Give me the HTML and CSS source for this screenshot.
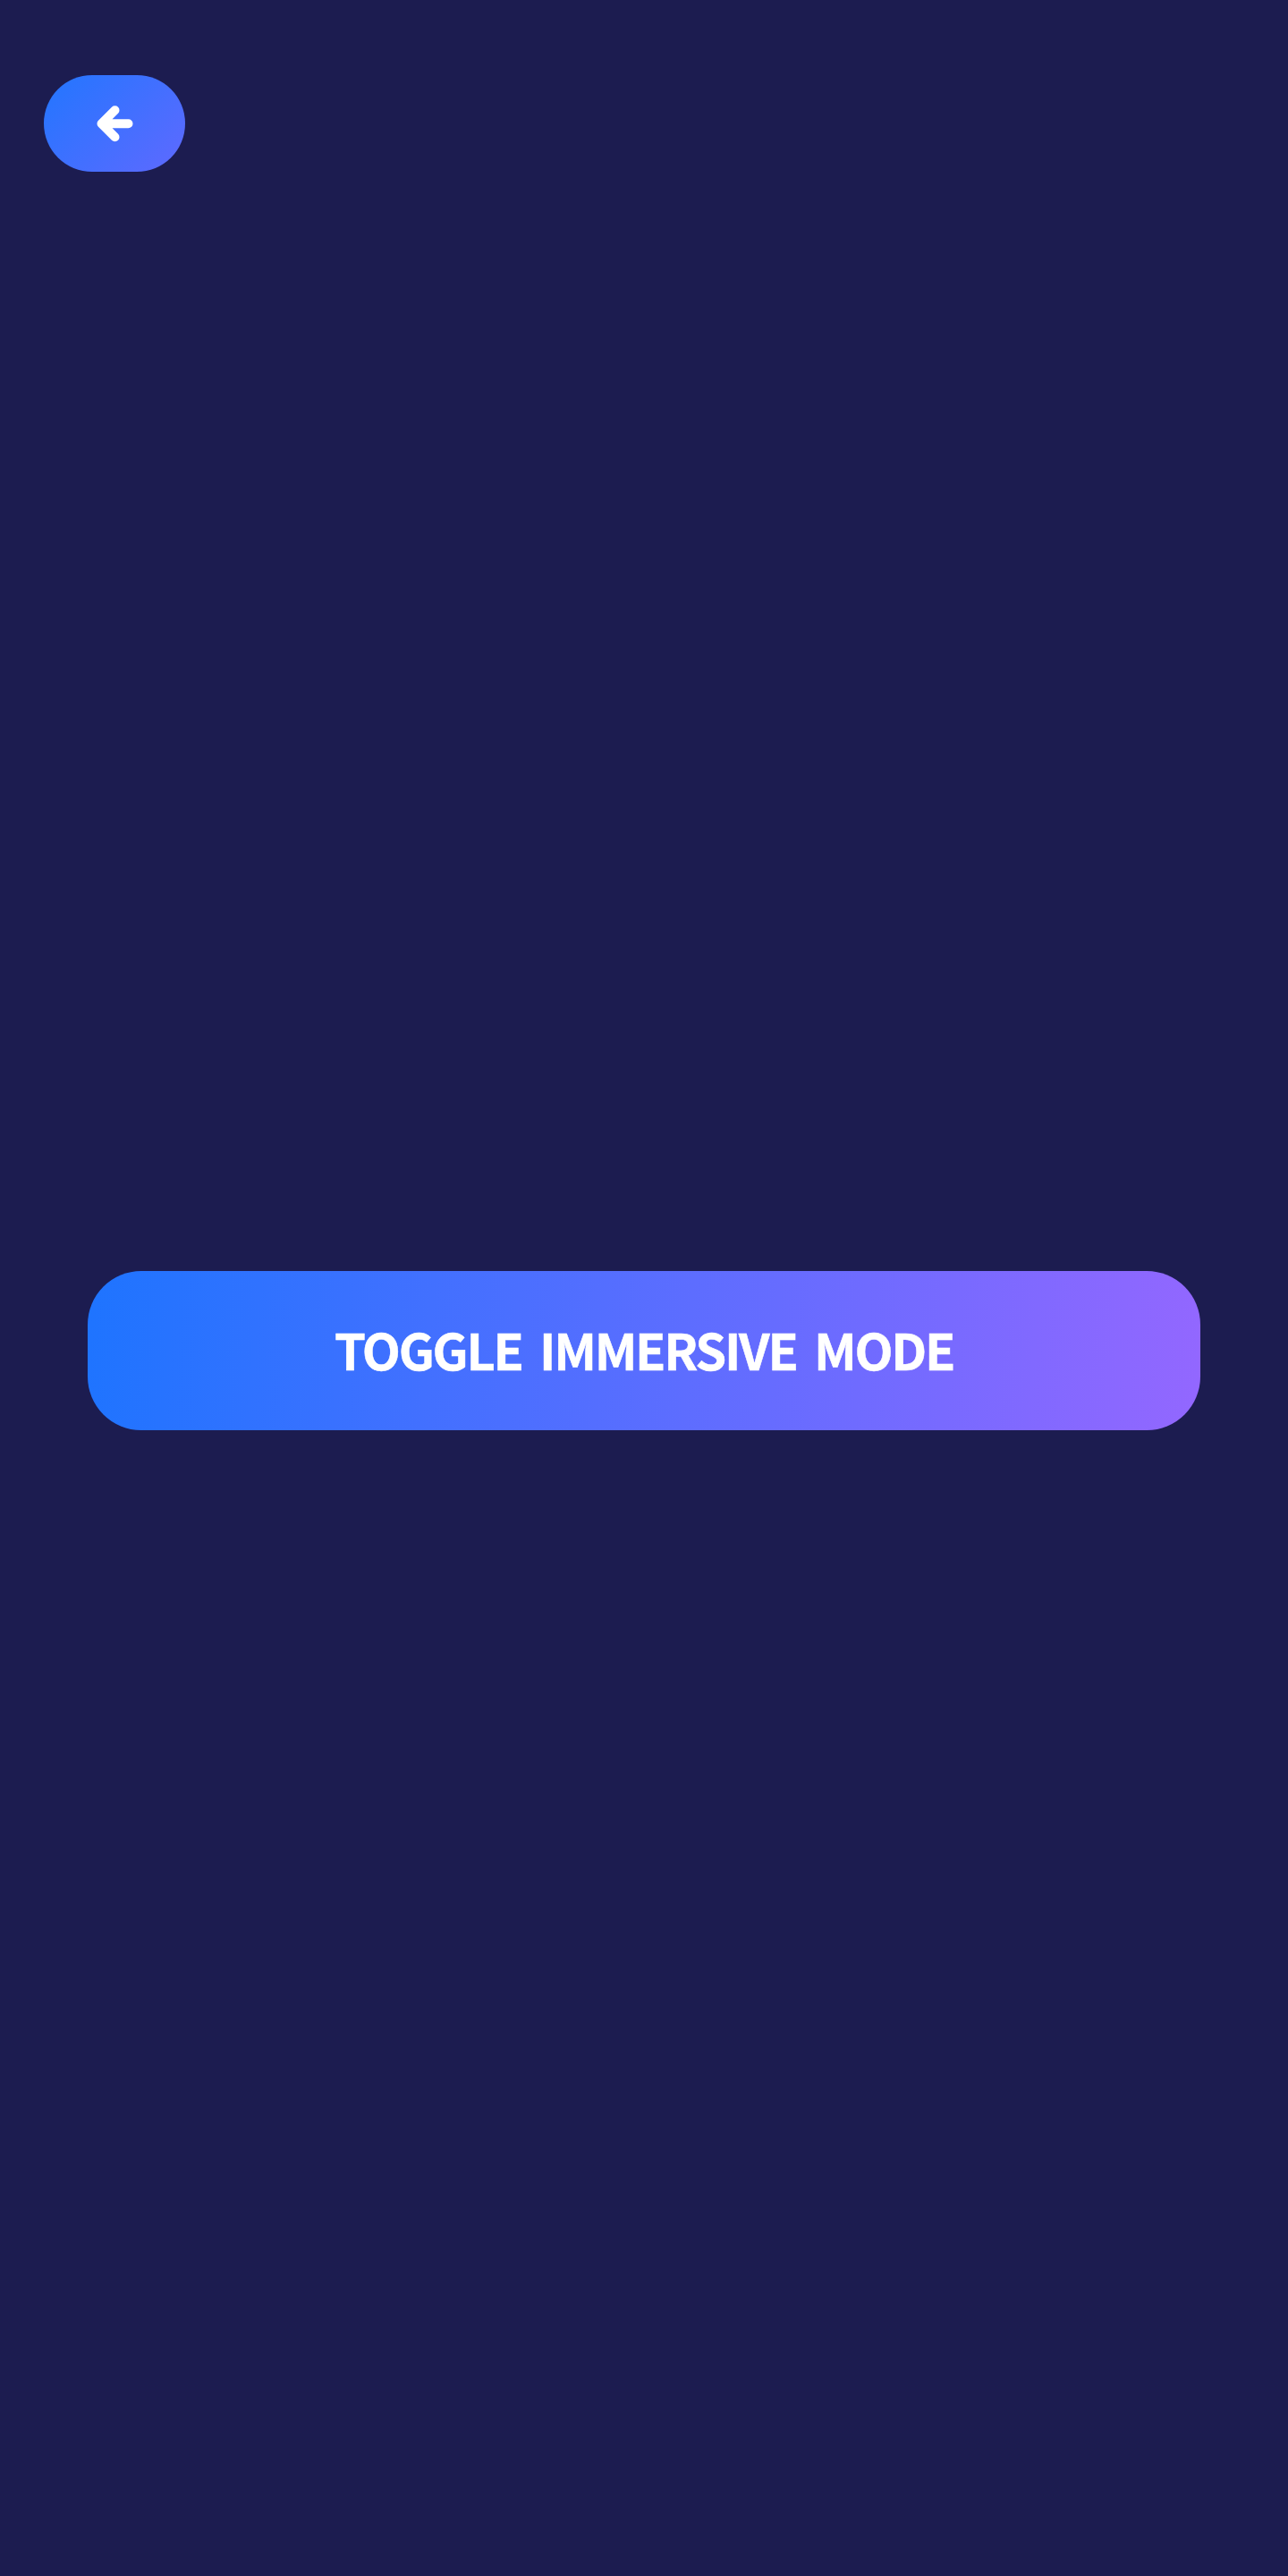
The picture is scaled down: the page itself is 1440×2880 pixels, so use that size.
FILE: index.html
```html
<!DOCTYPE html>
<html lang="en">
<head>
<meta charset="utf-8">
<title>Immersive Mode</title>
<link rel="stylesheet" href="styles.css">
</head>
<body>
<div class="screen">
  <header class="topbar">
    <button class="back-btn" aria-label="Back">
      <svg class="back-icon" width="44" height="44" viewBox="0 0 44 44" aria-hidden="true">
        <path d="M37.5 22.3 H7.5 M22.5 7.3 L7.5 22.3 L22.5 37.3" fill="none" stroke="#fff" stroke-width="10" stroke-linecap="round" stroke-linejoin="round"/>
      </svg>
    </button>
  </header>
  <main class="content">
    <button class="toggle-btn">TOGGLE IMMERSIVE MODE</button>
  </main>
</div>
</body>
</html>
```

FILE: styles.css
```css
html, body {
  margin: 0;
  padding: 0;
  background: #1c1c50;
}

.screen {
  width: 1440px;
  height: 2880px;
  background: #1c1c50;
  display: flex;
  flex-direction: column;
  font-family: "Noto Sans CJK SC", "Noto Sans", sans-serif;
}

.topbar {
  padding: 84px 0 0 49px;
  display: flex;
}

.back-btn {
  width: 158px;
  height: 108px;
  border: none;
  border-radius: 54px;
  padding: 0;
  background: linear-gradient(135deg, #2276ff 0%, #5f69ff 100%);
  display: flex;
  align-items: center;
  justify-content: center;
  cursor: pointer;
}

.back-icon {
  display: block;
}

.content {
  display: flex;
  flex-direction: column;
  padding: 1229px 98px 0 98px;
}

.toggle-btn {
  height: 178px;
  width: 100%;
  border: none;
  border-radius: 60px;
  background: linear-gradient(95deg, #1e74ff 0%, #9367ff 100%);
  color: #ffffff;
  font-family: "Noto Sans CJK SC", "Noto Sans", sans-serif;
  font-weight: 700;
  font-size: 56px;
  letter-spacing: -2.3px;
  word-spacing: 9px;
  cursor: pointer;
  padding: 0 0 6px 0;
  -webkit-text-stroke: 0.5px #ffffff;
}
```
